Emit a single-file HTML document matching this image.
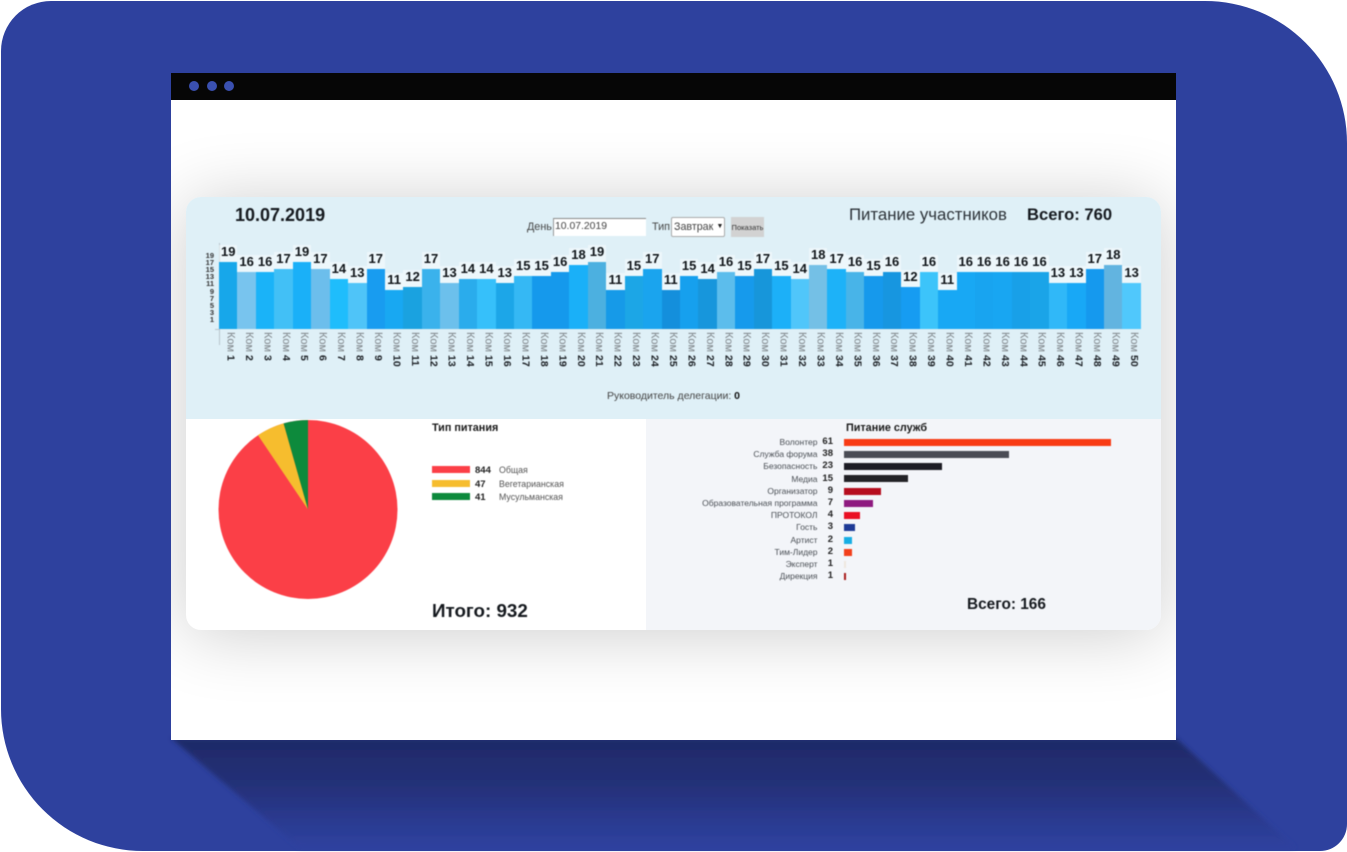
<!DOCTYPE html>
<html lang="ru">
<head>
<meta charset="utf-8">
<title>Питание участников</title>
<style>
html,body{margin:0;padding:0;background:#fff;width:1347px;height:852px;overflow:hidden}
body{position:relative;font-family:"Liberation Sans",Arial,sans-serif;color:#222}
.abs,.t{position:absolute}
.t{white-space:nowrap;line-height:1}
#blue{position:absolute;left:1px;top:1px;width:1346px;height:850px;background:#2e419e;border-radius:50px 142px 27px 142px;overflow:hidden}
#win{position:absolute;left:171px;top:73px;width:1005px;height:667px;background:#fff;overflow:hidden}
#bar{position:absolute;left:0;top:0;width:1005px;height:27px;background:#060606;z-index:2}
.dot{position:absolute;top:8px;width:10px;height:10px;border-radius:50%;background:#3a50b0}
#panel{position:absolute;left:15px;top:124px;width:975px;height:433px;border-radius:15px;background:#fff;box-shadow:0 4px 70px rgba(0,0,0,.2);overflow:hidden}
#top{position:absolute;left:0;top:0;width:975px;height:222px;background:#dff0f7}
#br{position:absolute;left:460px;top:222px;width:515px;height:211px;background:#f3f5f9}
#page{position:absolute;left:0;top:0;width:1347px;height:852px;filter:blur(.4px)}
#chart{position:absolute;left:219px;top:240px;width:922px;height:89px;display:flex}
.c{flex:1 1 0;position:relative}
.c s{position:absolute;left:0;right:0;bottom:0;height:calc(var(--v)*3.54px);background:var(--c)}
.c b{position:absolute;left:0;right:0;bottom:calc(var(--v)*3.54px);height:17px;line-height:14px;text-align:center;font-size:13px;color:#0f1418;background:rgba(255,255,255,.45)}
.c i,.c u{position:absolute;left:2px;width:100%;writing-mode:vertical-rl;line-height:18.44px;text-decoration:none;font-style:normal;white-space:nowrap}
.c i{top:91.5px;font-size:11px;color:#7f858a}
.c u{top:115px;font-size:10.5px;font-weight:bold;color:#1c2025}
.y{position:absolute;left:200px;width:14px;text-align:right;font-size:7.5px;font-weight:bold;color:#333;line-height:8px}
.r{position:absolute;height:7px}
.l{position:absolute;width:200px;left:617.5px;margin-top:-.5px;text-align:right;font-size:8.5px;line-height:12px;color:#4a4f55;white-space:nowrap}
.n{position:absolute;left:808px;width:25px;margin-top:-.5px;text-align:right;font-size:9.5px;line-height:12px;font-weight:bold;color:#222}
</style>
</head>
<body>
<div id="blue"></div>
<svg class="abs" style="left:0;top:0" width="1347" height="852" viewBox="0 0 1347 852">
<defs>
<linearGradient id="g" x1="0" y1="740" x2="0" y2="852" gradientUnits="userSpaceOnUse">
<stop offset="0" stop-color="#1e2a68"/><stop offset=".4" stop-color="#243078"/><stop offset=".72" stop-color="#2a3a90"/><stop offset=".95" stop-color="#2e419e"/>
</linearGradient>
<filter id="sb" x="-5%" y="-5%" width="110%" height="110%"><feGaussianBlur stdDeviation="2.5"/></filter>
</defs>
<polygon points="171,738 1176,738 1295,848 300,848" fill="url(#g)" filter="url(#sb)"/>
</svg>
<div id="win">
  <div id="bar">
    <div class="dot" style="left:18px"></div>
    <div class="dot" style="left:36px"></div>
    <div class="dot" style="left:53px"></div>
  </div>
  <div id="panel"><div id="top"></div><div id="br"></div></div>
</div>
<div id="page">
  <div class="t" style="left:235px;top:206px;font-size:18px;font-weight:bold;color:#15191e">10.07.2019</div>
  <div class="t" style="left:849px;top:207px;font-size:16.8px;color:#2c3238">Питание участников</div>
  <div class="t" style="left:1027px;top:206.5px;font-size:16.6px;font-weight:bold;color:#15191e">Всего: 760</div>

  <div class="t" style="left:527px;top:222px;font-size:10.8px;color:#444">День</div>
  <div class="abs" style="left:553px;top:218px;width:93px;height:18px;background:#fff;border-top:1px solid #8a8a8a;border-left:1px solid #999;box-sizing:border-box"></div>
  <div class="t" style="left:555px;top:222px;font-size:10.4px;color:#444">10.07.2019</div>
  <div class="t" style="left:652px;top:222px;font-size:10.8px;color:#444">Тип</div>
  <div class="abs" style="left:671px;top:217px;width:54px;height:20px;background:#fff;border:1px solid #aaa;border-radius:2px;box-sizing:border-box"></div>
  <div class="t" style="left:674px;top:222px;font-size:10.7px;color:#444">Завтрак</div>
  <div class="t" style="left:716.5px;top:222.5px;font-size:7px;color:#222">▼</div>
  <div class="abs" style="left:731px;top:217px;width:33px;height:20px;background:#d2d2d2"></div>
  <div class="t" style="left:731px;top:224px;width:33px;text-align:center;font-size:7.5px;color:#333">Показать</div>

  <div class="abs" style="left:219px;top:243px;width:1px;height:102px;background:#b9c6cc"></div>
  <div class="abs" style="left:215px;top:329px;width:4px;height:1px;background:#b9c6cc"></div>
  <div class="y" style="top:252px">19</div>
  <div class="y" style="top:259px">17</div>
  <div class="y" style="top:266px">15</div>
  <div class="y" style="top:273px">13</div>
  <div class="y" style="top:280px">11</div>
  <div class="y" style="top:288px">9</div>
  <div class="y" style="top:295px">7</div>
  <div class="y" style="top:302px">5</div>
  <div class="y" style="top:309px">3</div>
  <div class="y" style="top:316px">1</div>

  <div id="chart">
<div class="c" style="--v:19;--c:#17a7ea"><s></s><b>19</b><i>Ком</i><u>1</u></div>
<div class="c" style="--v:16;--c:#78c4ee"><s></s><b>16</b><i>Ком</i><u>2</u></div>
<div class="c" style="--v:16;--c:#1ab3f8"><s></s><b>16</b><i>Ком</i><u>3</u></div>
<div class="c" style="--v:17;--c:#42c0f6"><s></s><b>17</b><i>Ком</i><u>4</u></div>
<div class="c" style="--v:19;--c:#1ab0f8"><s></s><b>19</b><i>Ком</i><u>5</u></div>
<div class="c" style="--v:17;--c:#6cbeec"><s></s><b>17</b><i>Ком</i><u>6</u></div>
<div class="c" style="--v:14;--c:#1fbdfc"><s></s><b>14</b><i>Ком</i><u>7</u></div>
<div class="c" style="--v:13;--c:#4fc4f8"><s></s><b>13</b><i>Ком</i><u>8</u></div>
<div class="c" style="--v:17;--c:#189cf0"><s></s><b>17</b><i>Ком</i><u>9</u></div>
<div class="c" style="--v:11;--c:#18a8f2"><s></s><b>11</b><i>Ком</i><u>10</u></div>
<div class="c" style="--v:12;--c:#1aa2e0"><s></s><b>12</b><i>Ком</i><u>11</u></div>
<div class="c" style="--v:17;--c:#3ab2ec"><s></s><b>17</b><i>Ком</i><u>12</u></div>
<div class="c" style="--v:13;--c:#6cc0ec"><s></s><b>13</b><i>Ком</i><u>13</u></div>
<div class="c" style="--v:14;--c:#2aacec"><s></s><b>14</b><i>Ком</i><u>14</u></div>
<div class="c" style="--v:14;--c:#36c0fa"><s></s><b>14</b><i>Ком</i><u>15</u></div>
<div class="c" style="--v:13;--c:#1ca6e8"><s></s><b>13</b><i>Ком</i><u>16</u></div>
<div class="c" style="--v:15;--c:#35b8f4"><s></s><b>15</b><i>Ком</i><u>17</u></div>
<div class="c" style="--v:15;--c:#1599ec"><s></s><b>15</b><i>Ком</i><u>18</u></div>
<div class="c" style="--v:16;--c:#1599ec"><s></s><b>16</b><i>Ком</i><u>19</u></div>
<div class="c" style="--v:18;--c:#1ab0f8"><s></s><b>18</b><i>Ком</i><u>20</u></div>
<div class="c" style="--v:19;--c:#4cb0e0"><s></s><b>19</b><i>Ком</i><u>21</u></div>
<div class="c" style="--v:11;--c:#169ae8"><s></s><b>11</b><i>Ком</i><u>22</u></div>
<div class="c" style="--v:15;--c:#1ca6e6"><s></s><b>15</b><i>Ком</i><u>23</u></div>
<div class="c" style="--v:17;--c:#1aa4ee"><s></s><b>17</b><i>Ком</i><u>24</u></div>
<div class="c" style="--v:11;--c:#148fdc"><s></s><b>11</b><i>Ком</i><u>25</u></div>
<div class="c" style="--v:15;--c:#16a0ee"><s></s><b>15</b><i>Ком</i><u>26</u></div>
<div class="c" style="--v:14;--c:#1796dc"><s></s><b>14</b><i>Ком</i><u>27</u></div>
<div class="c" style="--v:16;--c:#5cbdec"><s></s><b>16</b><i>Ком</i><u>28</u></div>
<div class="c" style="--v:15;--c:#169aec"><s></s><b>15</b><i>Ком</i><u>29</u></div>
<div class="c" style="--v:17;--c:#1796da"><s></s><b>17</b><i>Ком</i><u>30</u></div>
<div class="c" style="--v:15;--c:#1cb0f8"><s></s><b>15</b><i>Ком</i><u>31</u></div>
<div class="c" style="--v:14;--c:#50c6fa"><s></s><b>14</b><i>Ком</i><u>32</u></div>
<div class="c" style="--v:18;--c:#74c0e6"><s></s><b>18</b><i>Ком</i><u>33</u></div>
<div class="c" style="--v:17;--c:#1db2f8"><s></s><b>17</b><i>Ком</i><u>34</u></div>
<div class="c" style="--v:16;--c:#48b4e8"><s></s><b>16</b><i>Ком</i><u>35</u></div>
<div class="c" style="--v:15;--c:#1699ec"><s></s><b>15</b><i>Ком</i><u>36</u></div>
<div class="c" style="--v:16;--c:#1796e0"><s></s><b>16</b><i>Ком</i><u>37</u></div>
<div class="c" style="--v:12;--c:#169cf2"><s></s><b>12</b><i>Ком</i><u>38</u></div>
<div class="c" style="--v:16;--c:#3cc4fa"><s></s><b>16</b><i>Ком</i><u>39</u></div>
<div class="c" style="--v:11;--c:#18a8f4"><s></s><b>11</b><i>Ком</i><u>40</u></div>
<div class="c" style="--v:16;--c:#18a8f4"><s></s><b>16</b><i>Ком</i><u>41</u></div>
<div class="c" style="--v:16;--c:#18a4f0"><s></s><b>16</b><i>Ком</i><u>42</u></div>
<div class="c" style="--v:16;--c:#18a6f2"><s></s><b>16</b><i>Ком</i><u>43</u></div>
<div class="c" style="--v:16;--c:#18a0e8"><s></s><b>16</b><i>Ком</i><u>44</u></div>
<div class="c" style="--v:16;--c:#1aa4e8"><s></s><b>16</b><i>Ком</i><u>45</u></div>
<div class="c" style="--v:13;--c:#30b8f8"><s></s><b>13</b><i>Ком</i><u>46</u></div>
<div class="c" style="--v:13;--c:#18a8f6"><s></s><b>13</b><i>Ком</i><u>47</u></div>
<div class="c" style="--v:17;--c:#1599ee"><s></s><b>17</b><i>Ком</i><u>48</u></div>
<div class="c" style="--v:18;--c:#62b4e0"><s></s><b>18</b><i>Ком</i><u>49</u></div>
<div class="c" style="--v:13;--c:#50c8fc"><s></s><b>13</b><i>Ком</i><u>50</u></div>
  </div>

  <div class="t" style="left:607px;top:391px;font-size:10.5px;color:#444">Руководитель делегации: <b style="color:#111">0</b></div>

  <svg class="abs" style="left:210px;top:412px" width="196" height="196" viewBox="210 412 196 196">
    <circle cx="308" cy="509.5" r="89.5" fill="#fb3f47"/>
    <path d="M308 509.5L283.6 423.4A89.5 89.5 0 0 0 258 435.3Z" fill="#f6bd2e"/>
    <path d="M308 509.5L308 420A89.5 89.5 0 0 0 283.6 423.4Z" fill="#0d8a3c"/>
  </svg>

  <div class="t" style="left:432px;top:422.5px;font-size:10.8px;font-weight:bold;color:#1a1a1a">Тип питания</div>
  <div class="abs" style="left:432px;top:466px;width:38px;height:7px;background:#fb3f47"></div>
  <div class="abs" style="left:432px;top:480px;width:38px;height:7px;background:#f6bd2e"></div>
  <div class="abs" style="left:432px;top:493px;width:38px;height:7px;background:#0d8a3c"></div>
  <div class="t" style="left:475px;top:466px;font-size:9.5px;font-weight:bold;color:#222">844</div>
  <div class="t" style="left:475px;top:480px;font-size:9.5px;font-weight:bold;color:#222">47</div>
  <div class="t" style="left:475px;top:493px;font-size:9.5px;font-weight:bold;color:#222">41</div>
  <div class="t" style="left:499px;top:466px;font-size:8.8px;color:#555">Общая</div>
  <div class="t" style="left:499px;top:480px;font-size:8.8px;color:#555">Вегетарианская</div>
  <div class="t" style="left:499px;top:493px;font-size:8.8px;color:#555">Мусульманская</div>
  <div class="t" style="left:432px;top:601.5px;font-size:18.8px;font-weight:bold;color:#15191e">Итого: 932</div>

  <div class="t" style="left:846px;top:422.5px;font-size:10.8px;font-weight:bold;color:#1a1a1a">Питание служб</div>

  <div class="l" style="top:436px">Волонтер</div><div class="n" style="top:436px">61</div><div class="r" style="left:844px;top:438.5px;width:267px;background:#f83b14"></div>
  <div class="l" style="top:448px">Служба форума</div><div class="n" style="top:448px">38</div><div class="r" style="left:844px;top:450.5px;width:165px;background:#4a4c55"></div>
  <div class="l" style="top:460px">Безопасность</div><div class="n" style="top:460px">23</div><div class="r" style="left:844px;top:463px;width:98px;background:#1c1c24"></div>
  <div class="l" style="top:473px">Медиа</div><div class="n" style="top:473px">15</div><div class="r" style="left:844px;top:475px;width:64px;background:#222226"></div>
  <div class="l" style="top:485px">Организатор</div><div class="n" style="top:485px">9</div><div class="r" style="left:844px;top:487.5px;width:37px;background:#b60d1e"></div>
  <div class="l" style="top:497px">Образовательная программа</div><div class="n" style="top:497px">7</div><div class="r" style="left:844px;top:499.5px;width:29px;background:#8e1a80"></div>
  <div class="l" style="top:509px">ПРОТОКОЛ</div><div class="n" style="top:509px">4</div><div class="r" style="left:844px;top:512px;width:16px;background:#ea1024"></div>
  <div class="l" style="top:521px">Гость</div><div class="n" style="top:521px">3</div><div class="r" style="left:844px;top:524px;width:11px;background:#1e3a96"></div>
  <div class="l" style="top:534px">Артист</div><div class="n" style="top:534px">2</div><div class="r" style="left:844px;top:536.5px;width:8px;background:#18aee4"></div>
  <div class="l" style="top:546px">Тим-Лидер</div><div class="n" style="top:546px">2</div><div class="r" style="left:844px;top:549px;width:8px;background:#f2401c"></div>
  <div class="l" style="top:558px">Эксперт</div><div class="n" style="top:558px">1</div><div class="r" style="left:844px;top:561px;width:2px;background:#eee6df"></div>
  <div class="l" style="top:570px">Дирекция</div><div class="n" style="top:570px">1</div><div class="r" style="left:844px;top:573px;width:2px;background:#a81c1c"></div>

  <div class="t" style="left:967px;top:597px;font-size:15.4px;font-weight:bold;color:#15191e">Всего: 166</div>
</div>
</body>
</html>
